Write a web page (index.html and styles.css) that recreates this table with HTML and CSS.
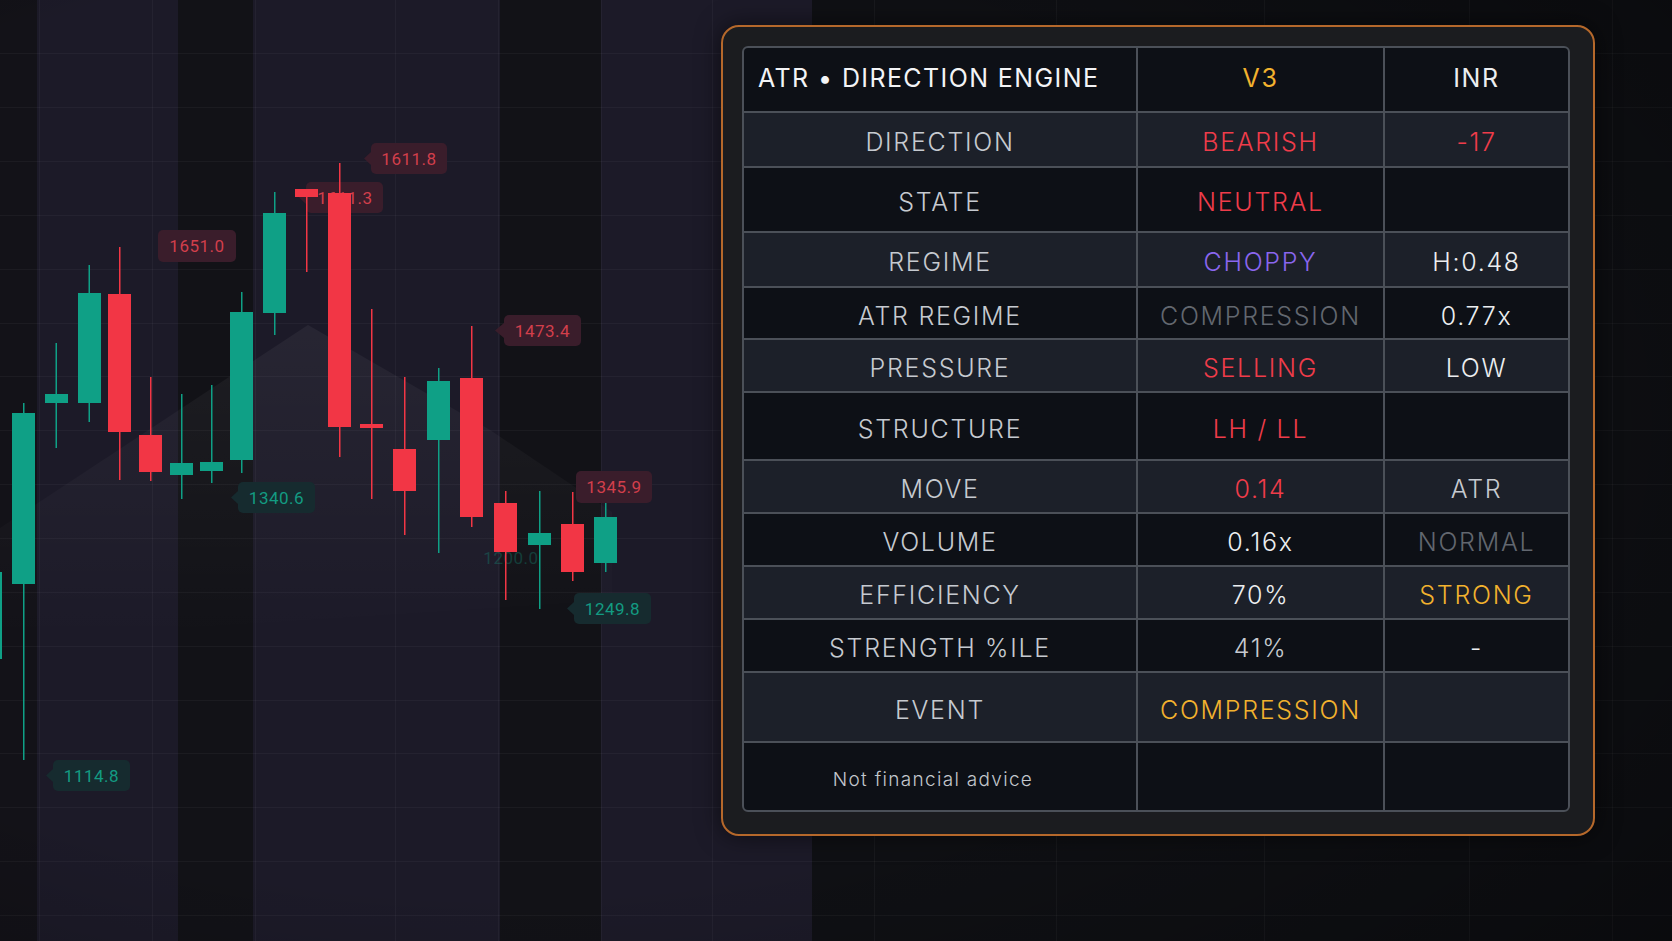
FILE: index.html
```html
<!DOCTYPE html>
<html>
<head>
<meta charset="utf-8">
<link rel="stylesheet" href="styles.css">
</head>
<body>
<div class="scene">
  <svg class="chart" width="1672" height="941" viewBox="0 0 1672 941" xmlns="http://www.w3.org/2000/svg">
    <defs>
      <linearGradient id="mount" x1="0" y1="0" x2="0" y2="1">
        <stop offset="0" stop-color="#ffffff" stop-opacity="0.05"/>
        <stop offset="1" stop-color="#ffffff" stop-opacity="0"/>
      </linearGradient>
      <radialGradient id="vig" cx="0.3" cy="0.45" r="0.9">
        <stop offset="0.55" stop-color="#000" stop-opacity="0"/>
        <stop offset="1" stop-color="#000" stop-opacity="0.35"/>
      </radialGradient>
    </defs>
    <!-- bands -->
    <rect x="0" y="0" width="37" height="941" fill="#131218"/>
    <rect x="37" y="0" width="141" height="941" fill="#1c1a28"/>
    <rect x="178" y="0" width="75" height="941" fill="#121217"/>
    <rect x="253" y="0" width="247" height="941" fill="#1c1a28"/>
    <rect x="500" y="0" width="101" height="941" fill="#121217"/>
    <rect x="601" y="0" width="211" height="941" fill="#1c1a28"/>
    <rect x="812" y="0" width="860" height="941" fill="#0f1014"/>
    <!-- grid -->
    <g stroke="#ffffff" stroke-opacity="0.04" stroke-width="1">
      <line x1="0" y1="53.5" x2="1672" y2="53.5"/>
      <line x1="0" y1="107.5" x2="1672" y2="107.5"/>
      <line x1="0" y1="161.5" x2="1672" y2="161.5"/>
      <line x1="0" y1="215.5" x2="1672" y2="215.5"/>
      <line x1="0" y1="269.5" x2="1672" y2="269.5"/>
      <line x1="0" y1="323.5" x2="1672" y2="323.5"/>
      <line x1="0" y1="376.5" x2="1672" y2="376.5"/>
      <line x1="0" y1="430.5" x2="1672" y2="430.5"/>
      <line x1="0" y1="484.5" x2="1672" y2="484.5"/>
      <line x1="0" y1="538.5" x2="1672" y2="538.5"/>
      <line x1="0" y1="592.5" x2="1672" y2="592.5"/>
      <line x1="0" y1="646.5" x2="1672" y2="646.5"/>
      <line x1="0" y1="700.5" x2="1672" y2="700.5"/>
      <line x1="0" y1="753.5" x2="1672" y2="753.5"/>
      <line x1="0" y1="807.5" x2="1672" y2="807.5"/>
      <line x1="0" y1="861.5" x2="1672" y2="861.5"/>
      <line x1="0" y1="915.5" x2="1672" y2="915.5"/>
      <line x1="39.5" y1="0" x2="39.5" y2="941"/>
      <line x1="152.5" y1="0" x2="152.5" y2="941"/>
      <line x1="255.5" y1="0" x2="255.5" y2="941"/>
      <line x1="395.5" y1="0" x2="395.5" y2="941"/>
      <line x1="498.5" y1="0" x2="498.5" y2="941"/>
      <line x1="601.5" y1="0" x2="601.5" y2="941"/>
      <line x1="712.5" y1="0" x2="712.5" y2="941"/>
      <line x1="874.5" y1="0" x2="874.5" y2="941"/>
      <line x1="1056.5" y1="0" x2="1056.5" y2="941"/>
      <line x1="1264.5" y1="0" x2="1264.5" y2="941"/>
      <line x1="1469.5" y1="0" x2="1469.5" y2="941"/>
      <line x1="1612.5" y1="0" x2="1612.5" y2="941"/>
    </g>
    <!-- mountain -->
    <polygon points="0,528 308,325 490,430 612,512 612,600 0,640" fill="url(#mount)"/>
    <!-- tags -->
    <g class="tag-red">
      <path d="M364 158.5 L371 152 L371 165 Z"/>
      <rect x="371" y="143" width="76" height="31" rx="5"/>
      <path d="M299 197.5 L306 191 L306 204 Z"/>
      <rect x="306" y="182" width="77" height="31" rx="5"/>
      <rect x="158" y="230" width="78" height="32" rx="5"/>
      <path d="M495 330.5 L504 323 L504 338 Z"/>
      <rect x="504" y="315" width="77" height="31" rx="5"/>
      <rect x="576" y="471" width="76" height="32" rx="5"/>
    </g>
    <g class="tag-green">
      <path d="M231 497.5 L238 491 L238 504 Z"/>
      <rect x="238" y="482" width="77" height="31" rx="5"/>
      <path d="M567 608.5 L574 602 L574 615 Z"/>
      <rect x="574" y="593" width="77" height="31" rx="5"/>
      <path d="M46 775.5 L53 769 L53 782 Z"/>
      <rect x="53" y="760" width="77" height="31" rx="5"/>
    </g>
    <g class="tag-text red">
      <text x="409" y="164.5">1611.8</text>
      <text x="345" y="203.5">1611.3</text>
      <text x="197" y="252">1651.0</text>
      <text x="542.5" y="336.5">1473.4</text>
      <text x="614" y="492.5">1345.9</text>
    </g>
    <g class="tag-text green">
      <text x="276.5" y="503.5">1340.6</text>
      <text x="612.5" y="614.5">1249.8</text>
      <text x="91.5" y="781.5">1114.8</text>
      <text x="511" y="564" opacity="0.3">1200.0</text>
    </g>
    <!-- candles -->
    <g class="cg">
      <rect x="0" y="572" width="2" height="87"/>
      <rect x="23" y="403" width="1.5" height="357"/>
      <rect x="12" y="413" width="23" height="171"/>
      <rect x="55.5" y="343" width="1.5" height="105"/>
      <rect x="45" y="394" width="23" height="9"/>
      <rect x="88.5" y="265" width="1.5" height="157"/>
      <rect x="78" y="293" width="23" height="110"/>
      <rect x="181" y="394" width="1.5" height="105"/>
      <rect x="170" y="463" width="23" height="12"/>
      <rect x="211" y="385" width="1.5" height="98"/>
      <rect x="200" y="462" width="23" height="9"/>
      <rect x="241" y="292" width="1.5" height="181"/>
      <rect x="230" y="312" width="23" height="148"/>
      <rect x="274" y="192" width="1.5" height="143"/>
      <rect x="263" y="213" width="23" height="100"/>
      <rect x="438" y="368" width="1.5" height="185"/>
      <rect x="427" y="381" width="23" height="59"/>
      <rect x="539" y="491" width="1.5" height="118"/>
      <rect x="528" y="533" width="23" height="12"/>
      <rect x="605" y="503" width="1.5" height="69"/>
      <rect x="594" y="517" width="23" height="46"/>
    </g>
    <g class="cr">
      <rect x="119" y="247" width="1.5" height="233"/>
      <rect x="108" y="294" width="23" height="138"/>
      <rect x="150" y="377" width="1.5" height="104"/>
      <rect x="139" y="435" width="23" height="37"/>
      <rect x="306" y="190" width="1.5" height="82"/>
      <rect x="295" y="189" width="23" height="8"/>
      <rect x="339" y="163" width="1.5" height="294"/>
      <rect x="328" y="193" width="23" height="234"/>
      <rect x="371" y="309" width="1.5" height="190"/>
      <rect x="360" y="424" width="23" height="4"/>
      <rect x="404" y="377" width="1.5" height="158"/>
      <rect x="393" y="449" width="23" height="42"/>
      <rect x="471" y="326" width="1.5" height="201"/>
      <rect x="460" y="378" width="23" height="139"/>
      <rect x="505" y="491" width="1.5" height="109"/>
      <rect x="494" y="503" width="23" height="49"/>
      <rect x="572" y="492" width="1.5" height="89"/>
      <rect x="561" y="524" width="23" height="48"/>
    </g>
    <rect x="0" y="0" width="1672" height="941" fill="url(#vig)"/>
  </svg>

  <div class="panel">
    <div class="tbl">
      <div class="row d head">
        <div class="c title">ATR • DIRECTION ENGINE</div>
        <div class="c gold">V3</div>
        <div class="c white">INR</div>
      </div>
      <div class="row l">
        <div class="c lbl">DIRECTION</div>
        <div class="c red">BEARISH</div>
        <div class="c red">-17</div>
      </div>
      <div class="row d">
        <div class="c lbl">STATE</div>
        <div class="c red">NEUTRAL</div>
        <div class="c"></div>
      </div>
      <div class="row l">
        <div class="c lbl">REGIME</div>
        <div class="c purple">CHOPPY</div>
        <div class="c white">H:0.48</div>
      </div>
      <div class="row d">
        <div class="c lbl">ATR REGIME</div>
        <div class="c dim">COMPRESSION</div>
        <div class="c white">0.77x</div>
      </div>
      <div class="row l">
        <div class="c lbl">PRESSURE</div>
        <div class="c red">SELLING</div>
        <div class="c white">LOW</div>
      </div>
      <div class="row d">
        <div class="c lbl">STRUCTURE</div>
        <div class="c red">LH / LL</div>
        <div class="c"></div>
      </div>
      <div class="row l">
        <div class="c lbl">MOVE</div>
        <div class="c red">0.14</div>
        <div class="c lbl">ATR</div>
      </div>
      <div class="row d">
        <div class="c lbl">VOLUME</div>
        <div class="c white">0.16x</div>
        <div class="c dim">NORMAL</div>
      </div>
      <div class="row l">
        <div class="c lbl">EFFICIENCY</div>
        <div class="c white">70%</div>
        <div class="c gold">STRONG</div>
      </div>
      <div class="row d">
        <div class="c lbl">STRENGTH %ILE</div>
        <div class="c lbl">41%</div>
        <div class="c white">-</div>
      </div>
      <div class="row l">
        <div class="c lbl">EVENT</div>
        <div class="c gold">COMPRESSION</div>
        <div class="c"></div>
      </div>
      <div class="row d">
        <div class="c note">Not financial advice</div>
        <div class="c"></div>
        <div class="c"></div>
      </div>
    </div>
  </div>
</div>
</body>
</html>
```

FILE: styles.css
```css
html, body {
  margin: 0;
  padding: 0;
  background: #0f1014;
}

.scene {
  position: relative;
  width: 1672px;
  height: 941px;
  overflow: hidden;
  display: flex;
  justify-content: flex-end;
  align-items: flex-start;
  padding: 25px 77px 0 0;
  box-sizing: border-box;
  font-family: "Inter", "Noto Sans", sans-serif;
}

.chart {
  position: absolute;
  left: 0;
  top: 0;
}

.tag-red rect, .tag-red path { fill: #3a1d2b; }
.tag-green rect, .tag-green path { fill: #162b2f; }

.tag-text text {
  font-family: "Roboto", "Liberation Sans", sans-serif;
  font-size: 17px;
  letter-spacing: 0.5px;
  text-anchor: middle;
}
.tag-text.red text { fill: #d23f4b; }
.tag-text.green text { fill: #139b82; }

.cg rect { fill: #0fa086; }
.cr rect { fill: #f23645; }

.panel {
  position: relative;
  width: 874px;
  height: 811px;
  box-sizing: border-box;
  border: 2px solid #b5682b;
  border-radius: 18px;
  background: #1b1c1f;
  padding: 19px 23px 22px 19px;
  box-shadow: 0 0 24px rgba(0, 0, 0, 0.55);
}

.tbl {
  display: grid;
  grid-template-columns: 392px 245px 183px;
  grid-template-rows: 63px 53px 63px 53px 50px 51px 66px 51px 51px 51px 51px 68px 67px;
  gap: 2px;
  border: 2px solid #4b5058;
  border-radius: 6px;
  background: #4b5058;
  overflow: hidden;
}

.row { display: contents; }

.c {
  display: flex;
  align-items: center;
  justify-content: center;
  box-sizing: border-box;
  padding-top: 5px;
  font-size: 25px;
  font-weight: 300;
  letter-spacing: 1.7px;
  color: #c6cad0;
  white-space: nowrap;
}

.row.head .c {
  padding-top: 0;
  padding-bottom: 4px;
  font-weight: 400;
}

.row.d .c { background: #0d1016; }
.row.l .c { background: #1c2029; }

.c.title {
  justify-content: flex-start;
  padding-left: 14px;
  color: #f3f4f6;
  letter-spacing: 1.4px;
}

.c.lbl { color: #c6cad0; }
.c.white { color: #eceef0; }
.c.gold { color: #f2b22e; }
.c.red { color: #ef3c4a; }
.c.purple { color: #8a66ee; }
.c.dim { color: #62676f; }

.c.note {
  font-size: 19px;
  letter-spacing: 1.3px;
  padding-right: 14px;
  color: #c3c7cd;
}
```
